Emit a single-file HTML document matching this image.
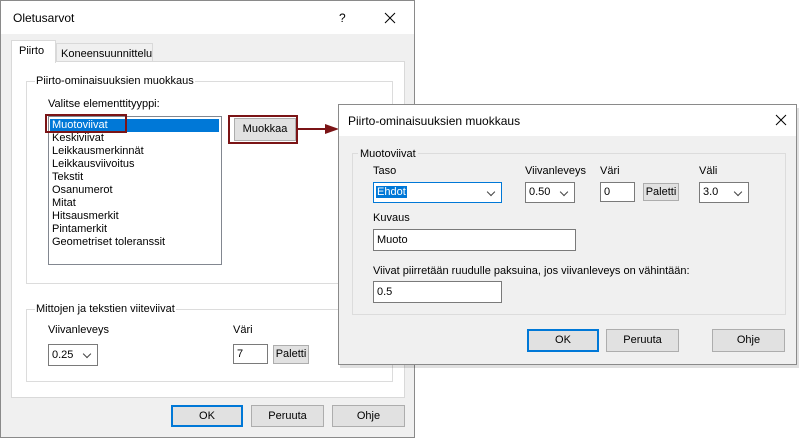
<!DOCTYPE html>
<html><head><meta charset="utf-8"><style>
*{box-sizing:border-box;margin:0;padding:0}
body{width:799px;height:438px;background:#fff;font-family:"Liberation Sans",sans-serif;font-size:11px;color:#000;position:relative;overflow:hidden}
.a{position:absolute}
.t{position:absolute;white-space:nowrap;line-height:14px}
.btn{position:absolute;background:#e1e1e1;border:1px solid #adadad;text-align:center;line-height:20px}
.grp{position:absolute;border:1px solid #dcdcdc}
.inp{position:absolute;background:#fff;border:1px solid #7a7a7a;line-height:20px;padding-left:3px}
.chev{position:absolute;right:7px;top:6px;width:6px;height:6px;border-right:1px solid #444;border-bottom:1px solid #444;transform:rotate(45deg)}
</style></head><body>
<!-- main dialog -->
<div class="a" style="left:0;top:0;width:415px;height:438px;background:#f0f0f0;border:1px solid #8a8a8a"></div>
<div class="a" style="left:1px;top:1px;width:413px;height:33px;background:#fff"></div>
<div class="t" style="left:13px;top:11px;font-size:12px">Oletusarvot</div>
<div class="t" style="left:339px;top:11px;font-size:12px">?</div>
<svg class="a" style="left:384px;top:12px" width="12" height="12"><path d="M1 1L11 11M11 1L1 11" stroke="#000" stroke-width="1"/></svg>
<!-- tab panel -->
<div class="a" style="left:11px;top:61px;width:394px;height:337px;background:#fff;border:1px solid #d9d9d9"></div>
<div class="a" style="left:56px;top:43px;width:97px;height:19px;background:#f0f0f0;border:1px solid #d9d9d9"></div>
<div class="t" style="left:61px;top:47px">Koneensuunnittelu</div>
<div class="a" style="left:11px;top:40px;width:45px;height:23px;background:#fff;border:1px solid #d9d9d9;border-bottom:none"></div>
<div class="t" style="left:19px;top:44px">Piirto</div>
<!-- group 1 -->
<div class="grp" style="left:26px;top:81px;width:367px;height:203px;"></div>
<div class="t" style="left:35px;top:74px;background:#fff;padding:0 1px">Piirto-ominaisuuksien muokkaus</div>
<div class="t" style="left:48px;top:97px">Valitse elementtityyppi:</div>
<div class="a" style="left:48px;top:116px;width:174px;height:149px;background:#fff;border:1px solid #828790"></div>
<div class="a" style="left:50px;top:119px;width:169px;height:13px;background:#0078d7"></div>
<div class="t" style="left:52px;top:119px;line-height:13px;color:#fff">Muotoviivat</div>
<div class="t" style="left:52px;top:132px;line-height:13px">Keskiviivat<br>Leikkausmerkinnät<br>Leikkausviivoitus<br>Tekstit<br>Osanumerot<br>Mitat<br>Hitsausmerkit<br>Pintamerkit<br>Geometriset toleranssit</div>
<div class="a" style="left:45px;top:114px;width:82px;height:19px;border:2px solid #7b1416"></div>
<div class="btn" style="left:234px;top:118px;width:62px;height:23px;line-height:21px">Muokkaa</div>
<div class="a" style="left:228px;top:115px;width:70px;height:29px;border:2px solid #7b1416"></div>
<div class="a" style="left:297px;top:128px;width:30px;height:2px;background:#7b1416"></div>
<div class="a" style="left:325px;top:124px;width:0;height:0;border-left:14px solid #7b1416;border-top:5px solid transparent;border-bottom:5px solid transparent"></div>
<!-- group 2 -->
<div class="grp" style="left:26px;top:309px;width:367px;height:73px;"></div>
<div class="t" style="left:35px;top:302px;background:#fff;padding:0 1px">Mittojen ja tekstien viiteviivat</div>
<div class="t" style="left:48px;top:323px">Viivanleveys</div>
<div class="inp" style="left:48px;top:344px;width:50px;height:22px">0.25<span class="chev"></span></div>
<div class="t" style="left:233px;top:323px">Väri</div>
<div class="inp" style="left:233px;top:344px;width:35px;height:20px;line-height:18px">7</div>
<div class="btn" style="left:273px;top:345px;width:36px;height:19px;line-height:17px">Paletti</div>
<!-- bottom buttons -->
<div class="btn" style="left:171px;top:405px;width:72px;height:22px;border:2px solid #0078d7;line-height:18px">OK</div>
<div class="btn" style="left:251px;top:405px;width:73px;height:22px">Peruuta</div>
<div class="btn" style="left:332px;top:405px;width:73px;height:22px">Ohje</div>

<!-- second dialog -->
<div class="a" style="left:340px;top:108px;width:460px;height:260px;background:rgba(0,0,0,.12)"></div>
<div class="a" style="left:338px;top:104px;width:459px;height:261px;background:#f0f0f0;border:1px solid #8a8a8a"></div>
<div class="a" style="left:339px;top:105px;width:457px;height:31px;background:#fff"></div>
<div class="t" style="left:348px;top:114px;font-size:12px">Piirto-ominaisuuksien muokkaus</div>
<svg class="a" style="left:775px;top:114px" width="12" height="12"><path d="M1 1L11 11M11 1L1 11" stroke="#000" stroke-width="1"/></svg>
<div class="grp" style="left:352px;top:153px;width:434px;height:162px"></div>
<div class="t" style="left:358px;top:147px;background:#f0f0f0;padding:0 2px">Muotoviivat</div>
<div class="t" style="left:373px;top:164px">Taso</div>
<div class="inp" style="left:373px;top:182px;width:129px;height:21px;border-color:#0078d7;line-height:19px;padding-left:2px"><span style="background:#0078d7;color:#fff;padding:0 1px">Ehdot</span><span class="chev"></span></div>
<div class="t" style="left:525px;top:164px">Viivanleveys</div>
<div class="inp" style="left:525px;top:182px;width:50px;height:21px;line-height:19px">0.50<span class="chev"></span></div>
<div class="t" style="left:600px;top:164px">Väri</div>
<div class="inp" style="left:600px;top:182px;width:35px;height:20px;line-height:18px">0</div>
<div class="btn" style="left:643px;top:183px;width:36px;height:18px;line-height:16px">Paletti</div>
<div class="t" style="left:699px;top:164px">Väli</div>
<div class="inp" style="left:699px;top:182px;width:50px;height:21px;line-height:19px">3.0<span class="chev"></span></div>
<div class="t" style="left:373px;top:211px">Kuvaus</div>
<div class="inp" style="left:373px;top:229px;width:203px;height:22px">Muoto</div>
<div class="t" style="left:373px;top:264px">Viivat piirretään ruudulle paksuina, jos viivanleveys on vähintään:</div>
<div class="inp" style="left:373px;top:281px;width:129px;height:22px">0.5</div>
<div class="btn" style="left:527px;top:329px;width:72px;height:23px;border:2px solid #0078d7;line-height:19px">OK</div>
<div class="btn" style="left:606px;top:329px;width:73px;height:23px">Peruuta</div>
<div class="btn" style="left:712px;top:329px;width:73px;height:23px">Ohje</div>
</body></html>
